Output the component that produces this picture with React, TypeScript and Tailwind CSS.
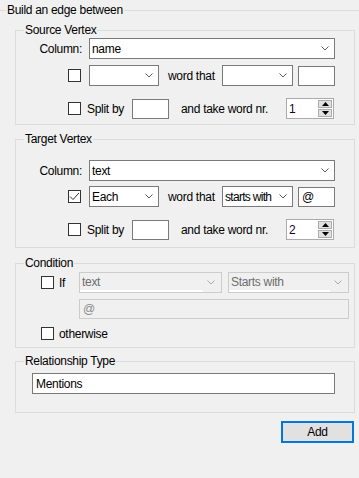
import React from "react";

function Chevron({ disabled }: { disabled?: boolean }) {
  return (
    <svg width="8" height="5" viewBox="0 0 8 5" className="shrink-0">
      <path d="M0.5 0.5 L4 4 L7.5 0.5" fill="none" stroke={disabled ? "#a8a8a8" : "#5a5a5a"} strokeWidth="1" />
    </svg>
  );
}

function Combo({ w, value, disabled, tight }: { w: string; value?: string; disabled?: boolean; tight?: boolean }) {
  if (disabled) {
    return (
      <div className={`${w} h-[21px] flex items-center border border-[#cccccc] bg-[#f0f0f0] text-[#6d6d6d]`}>
        <div className="flex-1 min-w-0 h-full pl-[2px] pt-[1px] flex items-center border-b-[2px] border-white whitespace-nowrap overflow-hidden">{value}</div>
        <div className="w-[18px] h-full flex items-center justify-center pr-[2px]">
          <Chevron disabled />
        </div>
      </div>
    );
  }
  return (
    <div className={`${w} h-[21px] flex items-center border border-[#7a7a7a] bg-white`}>
      <div className={`flex-1 min-w-0 pl-[2px] whitespace-nowrap overflow-hidden ${tight ? "tracking-[-0.7px]" : ""}`}>{value}</div>
      <div className="w-[15px] flex items-center justify-center pr-[3px]">
        <Chevron />
      </div>
    </div>
  );
}

function TextBox({ w, h = "h-[20px]", value, disabled }: { w: string; h?: string; value?: string; disabled?: boolean }) {
  return (
    <div
      className={`${w} ${h} flex items-center pl-[3px] border ${
        disabled ? "border-[#cccccc] bg-[#f0f0f0] text-[#8a8a8a]" : "border-[#7a7a7a] bg-white"
      }`}
    >
      {value}
    </div>
  );
}

function Check({ checked }: { checked?: boolean }) {
  return (
    <div className="w-[13px] h-[13px] border border-[#333333] bg-white flex items-center justify-center shrink-0">
      {checked && (
        <svg width="11" height="11" viewBox="0 0 11 11">
          <path d="M1 5.5 L4 8.5 L10 2" fill="none" stroke="#333333" strokeWidth="1" />
        </svg>
      )}
    </div>
  );
}

function Spinner({ value }: { value: string }) {
  return (
    <div className="w-[48px] h-[21px] flex border border-[#ababab] bg-white">
      <div className="flex-1 pl-[2px] flex items-center text-[#1a0033]">{value}</div>
      <div className="w-[15px] flex flex-col py-[1px] pr-[1px] gap-[1px]">
        <div className="flex-1 bg-[#e1e1e1] border border-[#adadad] flex items-center justify-center">
          <svg width="7" height="4" viewBox="0 0 7 4">
            <path d="M0 4 L3.5 0 L7 4 Z" fill="#000" />
          </svg>
        </div>
        <div className="flex-1 bg-[#e1e1e1] border border-[#adadad] flex items-center justify-center">
          <svg width="7" height="4" viewBox="0 0 7 4">
            <path d="M0 0 L3.5 4 L7 0 Z" fill="#000" />
          </svg>
        </div>
      </div>
    </div>
  );
}

function Group({ title, h, children, className = "" }: { title: string; h: string; children: React.ReactNode; className?: string }) {
  return (
    <div className={`relative w-[340px] ${h} border border-[#dcdcdc] ${className}`}>
      <span className="absolute left-[8px] top-[-9px] px-[1px] bg-[#f0f0f0] leading-[16px] whitespace-nowrap">{title}</span>
      {children}
    </div>
  );
}

function SplitRow({ nr }: { nr: string }) {
  return (
    <div className="flex items-center h-[21px] whitespace-nowrap">
      <div className="ml-[52px]">
        <Check />
      </div>
      <div className="w-[51px] pl-[6px]">Split by</div>
      <TextBox w="w-[37px]" />
      <div className="w-[117px] pl-[12px]">and take word nr.</div>
      <Spinner value={nr} />
    </div>
  );
}

function WordRow({ checked, each, that, word }: { checked?: boolean; each?: string; that?: string; word?: string }) {
  return (
    <div className="flex items-center h-[21px] whitespace-nowrap">
      <div className="ml-[52px]">
        <Check checked={checked} />
      </div>
      <div className="ml-[8px]">
        <Combo w="w-[70px]" value={each} />
      </div>
      <div className="w-[63px] pl-[9px]">word that</div>
      <Combo w="w-[71px]" value={that} tight />
      <div className="ml-[5px]">
        <TextBox w="w-[37px]" value={word} />
      </div>
    </div>
  );
}

function ColumnRow({ value }: { value: string }) {
  return (
    <div className="flex items-center h-[21px]">
      <div className="w-[66px] text-right">Column:</div>
      <div className="ml-[7px]">
        <Combo w="w-[246px]" value={value} />
      </div>
    </div>
  );
}

export default function App() {
  return (
    <div className="w-[359px] h-[478px] bg-[#f0f0f0] text-black text-[12px] tracking-[-0.3px] font-['Liberation_Sans',Arial,sans-serif] pt-[10px] overflow-hidden">
      <div className="relative border-t border-[#dcdcdc]">
        <span className="absolute left-[6px] top-[-9px] px-[1px] bg-[#f0f0f0] leading-[16px] whitespace-nowrap">Build an edge between</span>
        <div className="pl-[15px] pt-[19px]">
          <Group title="Source Vertex" h="h-[95px]">
            <div className="pt-[7px]">
              <ColumnRow value="name" />
              <div className="mt-[6px]">
                <WordRow />
              </div>
              <div className="mt-[12px]">
                <SplitRow nr="1" />
              </div>
            </div>
          </Group>

          <Group title="Target Vertex" h="h-[109px]" className="mt-[14px]">
            <div className="pt-[20px]">
              <ColumnRow value="text" />
              <div className="mt-[5px]">
                <WordRow checked each="Each" that="starts with" word="@" />
              </div>
              <div className="mt-[12px]">
                <SplitRow nr="2" />
              </div>
            </div>
          </Group>

          <Group title="Condition" h="h-[85px]" className="mt-[15px]">
            <div className="pt-[8px]">
              <div className="flex items-center h-[21px]">
                <div className="ml-[25px]">
                  <Check />
                </div>
                <div className="w-[25px] pl-[5px]">If</div>
                <Combo w="w-[143px]" value="text" disabled />
                <div className="ml-[6px]">
                  <Combo w="w-[121px]" value="Starts with" disabled />
                </div>
              </div>
              <div className="mt-[6px] ml-[63px]">
                <TextBox w="w-[270px]" value="@" disabled />
              </div>
              <div className="flex items-center h-[13px] mt-[8px]">
                <div className="ml-[25px]">
                  <Check />
                </div>
                <div className="pl-[5px]">otherwise</div>
              </div>
            </div>
          </Group>

          <Group title="Relationship Type" h="h-[52px]" className="mt-[13px]">
            <div className="pt-[11px] pl-[16px]">
              <TextBox w="w-[303px]" h="h-[21px]" value="Mentions" />
            </div>
          </Group>

          <div className="mt-[8px] ml-[266px]">
            <button className="w-[73px] h-[22px] border-2 border-[#0078d7] bg-[#e1e1e1] flex items-center justify-center leading-none">
              Add
            </button>
          </div>
        </div>
      </div>
    </div>
  );
}
